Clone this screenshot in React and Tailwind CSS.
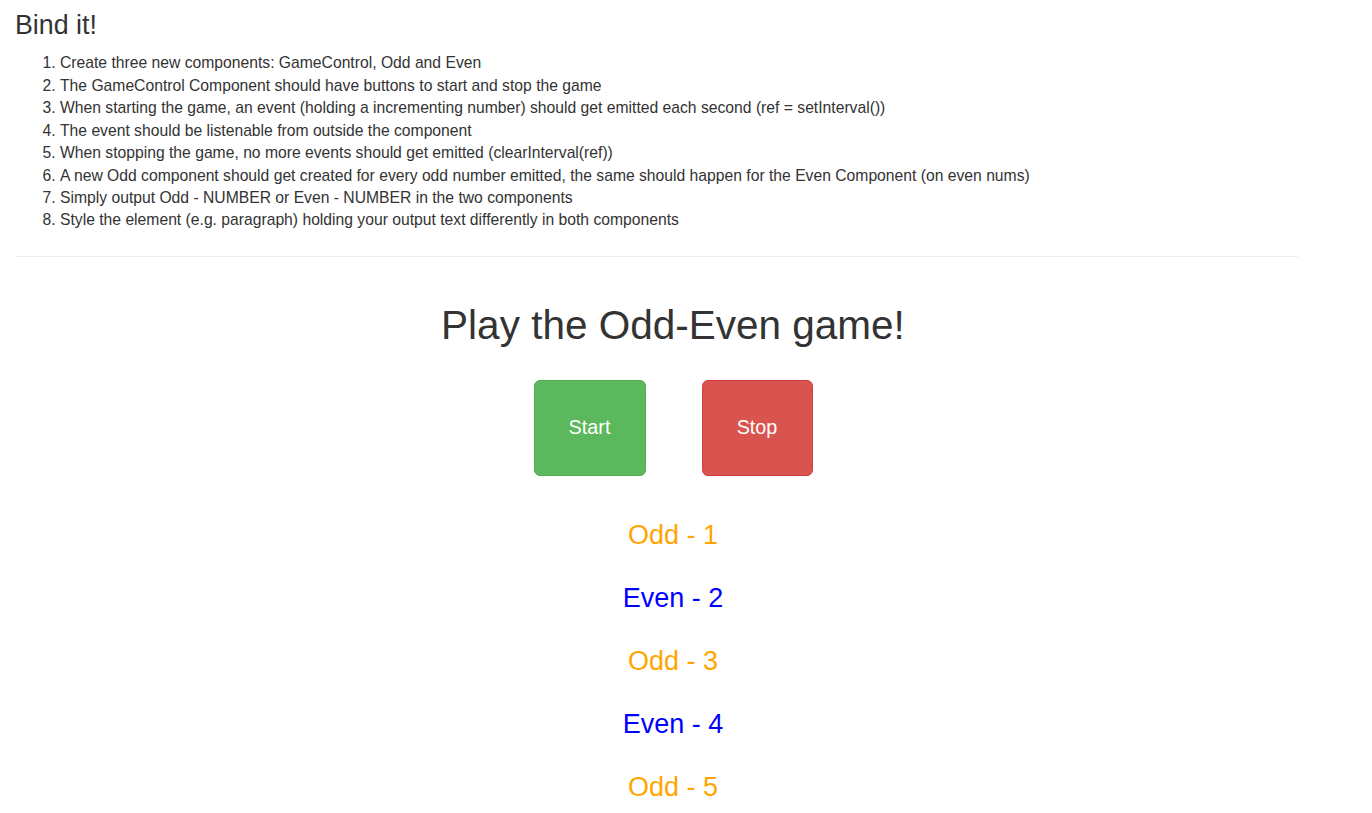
import React from 'react';

const steps = [
    'Create three new components: GameControl, Odd and Even',
    'The GameControl Component should have buttons to start and stop the game',
    'When starting the game, an event (holding a incrementing number) should get emitted each second (ref = setInterval())',
    'The event should be listenable from outside the component',
    'When stopping the game, no more events should get emitted (clearInterval(ref))',
    'A new Odd component should get created for every odd number emitted, the same should happen for the Even Component (on even nums)',
    'Simply output Odd - NUMBER or Even - NUMBER in the two components',
    'Style the element (e.g. paragraph) holding your output text differently in both components',
];

const numbers = [1, 2, 3, 4, 5];

function App() {
    return (
        <div className="min-h-screen bg-white text-[#333] font-['Liberation_Sans',Arial,sans-serif]">
            {/* Assignment */}
            <div className="pl-[15px] pt-[11px]">
                <h3 className="text-[26.8px] leading-[1.1] font-normal">Bind it!</h3>
                <ol className="mt-[12px] list-decimal pl-[45px] text-[15.7px] leading-[22.4px]">
                    {steps.map((step) => (
                        <li key={step}>{step}</li>
                    ))}
                </ol>
                <hr className="mt-[24px] w-[1283px] border-0 border-t border-[#eee]" />
            </div>

            {/* Game */}
            <div className="w-[1346px] text-center">
                <h1 className="mt-[46px] text-[40.5px] leading-[1.1] font-normal">Play the Odd-Even game!</h1>
                <div className="mt-[33px] flex justify-center gap-[56px]">
                    <button className="flex h-[96px] w-[112px] items-center justify-center rounded-[6px] border border-[#4cae4c] bg-[#5cb85c] text-[19.8px] text-white">
                        Start
                    </button>
                    <button className="flex h-[96px] w-[111px] items-center justify-center rounded-[6px] border border-[#d43f3a] bg-[#d9534f] text-[19.8px] text-white">
                        Stop
                    </button>
                </div>
                <div className="mt-[28px]">
                    {numbers.map((n) =>
                        n % 2 === 1 ? (
                            <p key={n} className="text-[27px] leading-[63px] text-[#ffa500]">
                                Odd - {n}
                            </p>
                        ) : (
                            <p key={n} className="text-[27px] leading-[63px] text-[#0000ff]">
                                Even - {n}
                            </p>
                        ),
                    )}
                </div>
            </div>
        </div>
    );
}

export default App;
